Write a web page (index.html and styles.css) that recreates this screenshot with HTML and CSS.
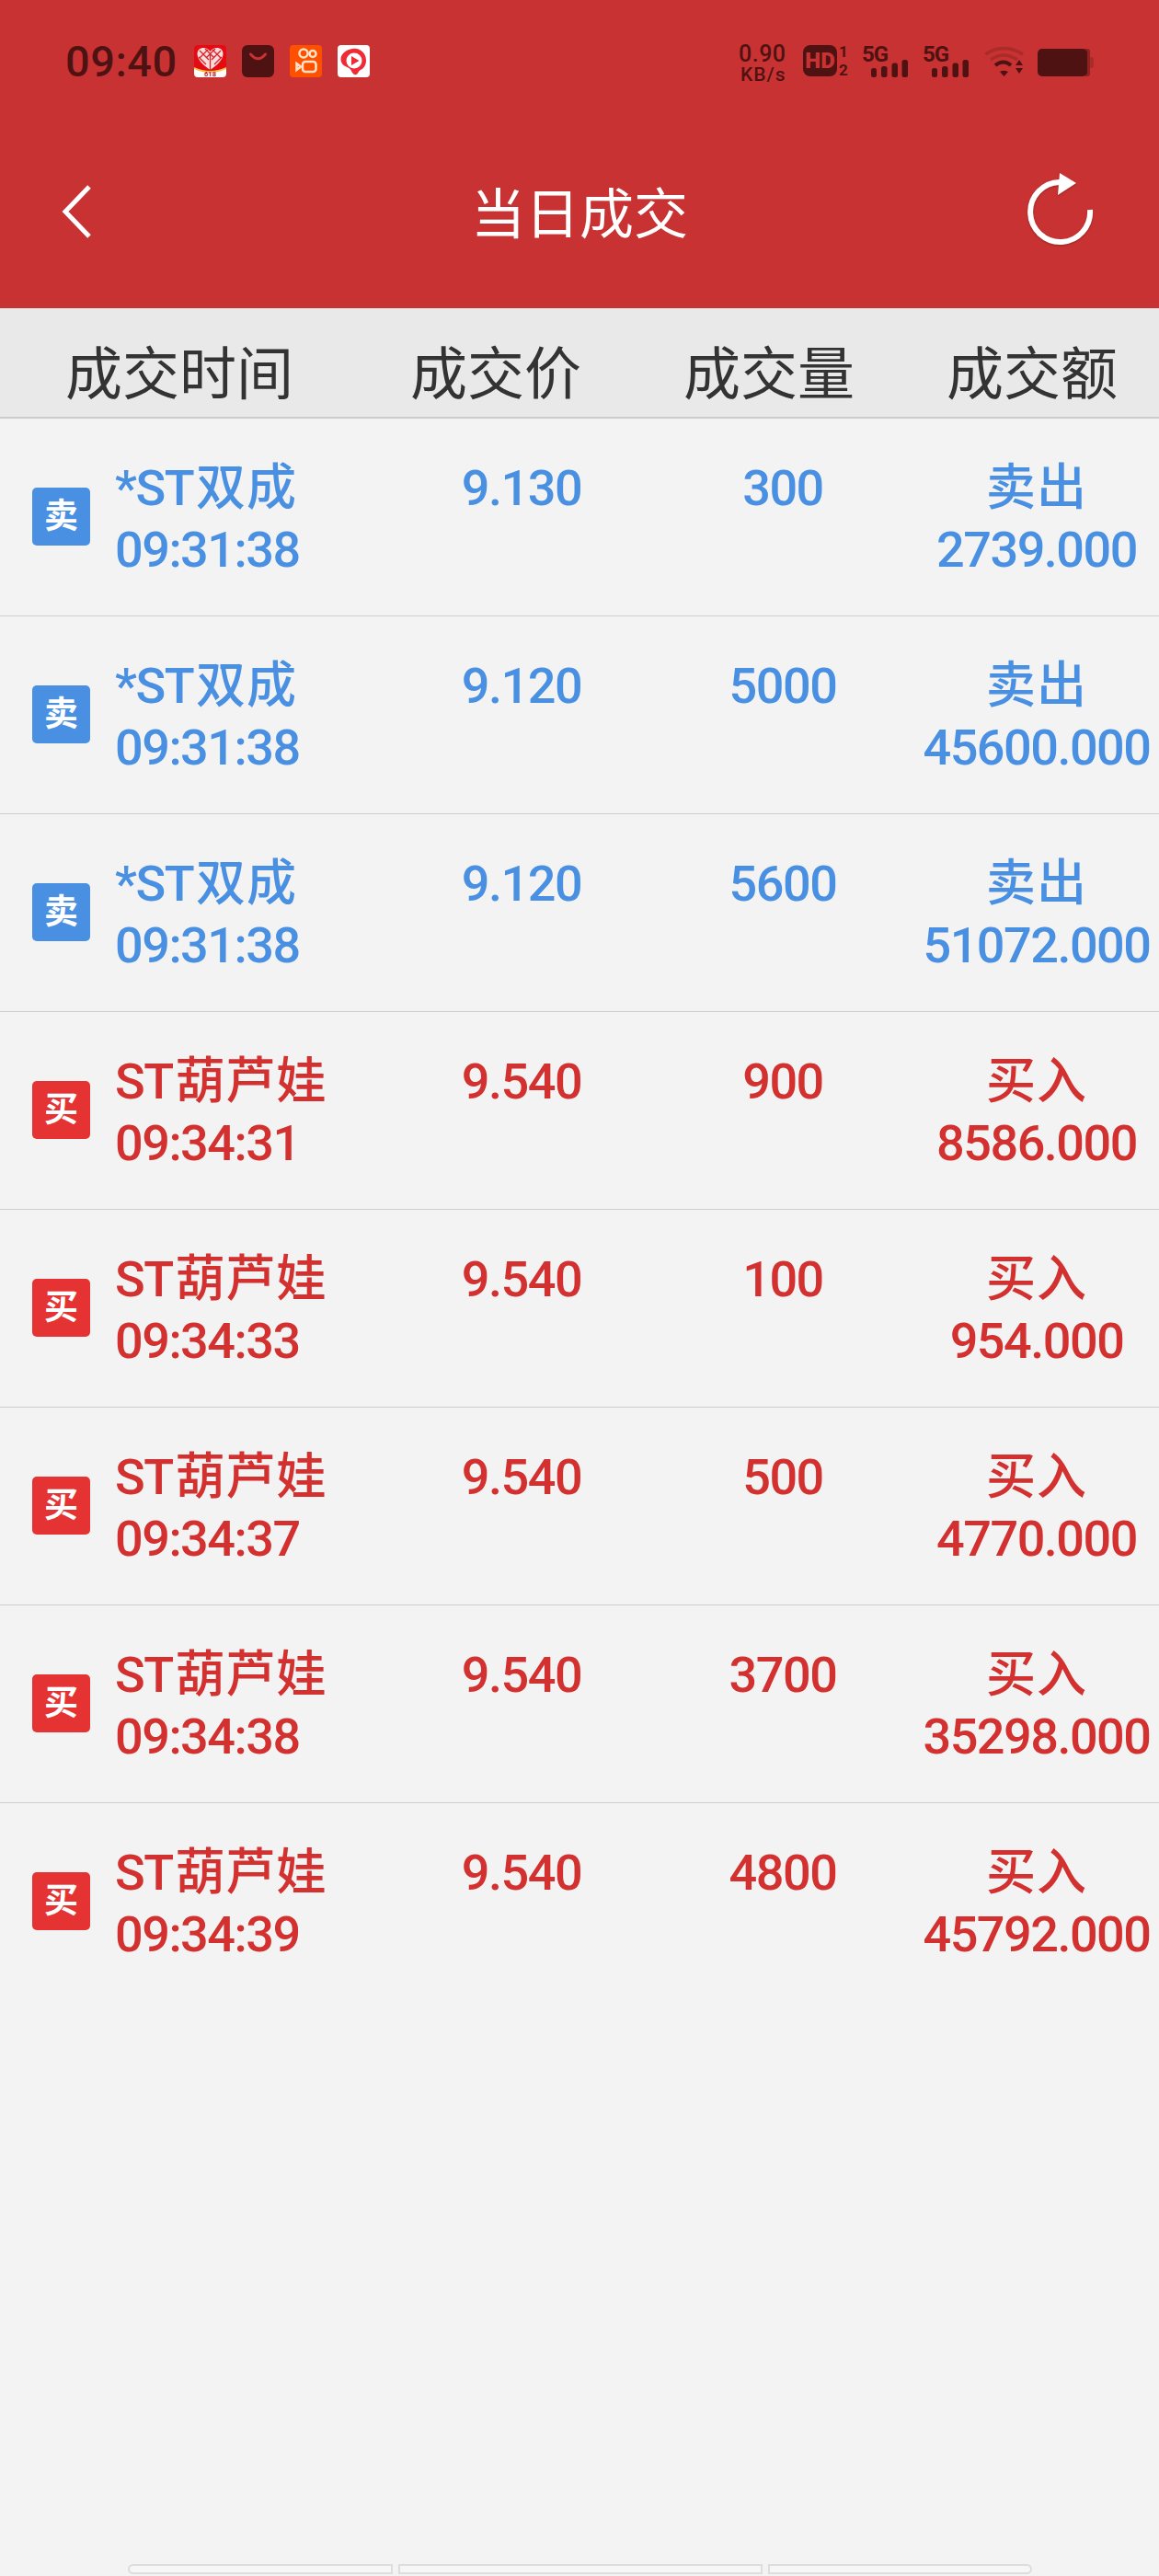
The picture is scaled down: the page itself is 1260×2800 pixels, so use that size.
FILE: index.html
```html
<!DOCTYPE html>
<html lang="zh-CN">
<head>
  <meta charset="UTF-8">
  <title>当日成交</title>
  <meta name="viewport" content="width=device-width, initial-scale=1.0">
  <link rel="stylesheet" href="styles.css">
</head>
<body>

  <div class="top">
    <!-- Status bar -->
    <div class="status">
      <div class="status-left">
        <span class="clock">09:40</span>
        <svg class="app" viewBox="0 0 35 35">
          <rect width="35" height="35" rx="4" fill="#e60b12"/>
          <path d="M0 25 Q17.500 33 35 25 V31 a4 4 0 0 1 -4 4 H4 a4 4 0 0 1 -4 -4 Z" fill="#fff"/>
          <path d="M0 24 Q17.500 32 35 24 V26 Q17.500 34 0 26 Z" fill="#f6c445"/>
          <path d="M17.500 27 C10 22 3.500 16 3.500 9.500 C3.500 5 7 3 10 3 C13 3 16 4.500 17.500 7 C19 4.500 22 3 25 3 C28 3 31.500 5 31.500 9.500 C31.500 16 25 22 17.500 27 Z" fill="#f7dcdc"/>
          <path d="M6 6 L16 16 M12 4 L22 14 M20 5 L29 14 M5 13 L13 21 M29 6 L19 16 M23 4 L13 14 M15 5 L6 14 M30 13 L22 21 M17.500 10 V28" stroke="#d8222a" stroke-width="1.300" fill="none"/>
          <text class="app-618" x="17.500" y="34">618</text>
        </svg>
        <svg class="app" viewBox="0 0 35 35">
          <rect width="35" height="35" rx="6" fill="#4f1212"/>
          <path d="M9.500 10 Q17.500 19.500 25.500 10" stroke="#c93232" stroke-width="3" fill="none" stroke-linecap="round"/>
        </svg>
        <svg class="app" viewBox="0 0 35 35">
          <rect width="35" height="35" rx="4" fill="#ff5000"/>
          <g fill="none" stroke="#ffe2c8" stroke-width="2.500">
            <circle cx="15" cy="9" r="4.500"/>
            <circle cx="25" cy="9.500" r="3.500"/>
            <rect x="14" y="18" width="14.500" height="11" rx="3"/>
            <path d="M7.500 20 L12 23.500 L7.500 27 Z"/>
          </g>
        </svg>
        <svg class="app" viewBox="0 0 35 35">
          <rect width="35" height="35" rx="4" fill="#fff"/>
          <path d="M16 4 C24 2.500 31 8.500 31 16.500 C31 21 29 25 25 27 C22 28.500 22.500 33 18.500 32 C15 31 15.500 26 11.500 24.500 C7 23 3.500 20 3.500 15.500 C3.500 9 10 5 16 4 Z" fill="#ee2b36"/>
          <circle cx="18" cy="17" r="8.500" fill="#fff"/>
          <path d="M15 12 L23.500 17 L15 22 Z" fill="#ee2b36"/>
        </svg>
      </div>
      <div class="status-right">
        <div class="speed"><span class="speed-num">0.90</span><span class="speed-unit">KB/s</span></div>
        <div class="hd">
          <span class="hd-box">HD</span>
          <span class="hd-nums"><span>1</span><span>2</span></span>
        </div>
        <div class="signal">
          <span class="signal-name">5G</span>
          <svg class="bars" viewBox="0 0 40 19">
            <rect x="0" y="9" width="6" height="10" rx="2.500"/>
            <rect x="11" y="7" width="6.500" height="12" rx="2.500"/>
            <rect x="22.500" y="3.500" width="6.500" height="15.500" rx="2.500"/>
            <rect x="33.500" y="0" width="6.500" height="19" rx="2.500"/>
          </svg>
        </div>
        <div class="signal">
          <span class="signal-name">5G</span>
          <svg class="bars" viewBox="0 0 40 19">
            <rect x="0" y="9" width="6" height="10" rx="2.500"/>
            <rect x="11" y="7" width="6.500" height="12" rx="2.500"/>
            <rect x="22.500" y="3.500" width="6.500" height="15.500" rx="2.500"/>
            <rect x="33.500" y="0" width="6.500" height="19" rx="2.500"/>
          </svg>
        </div>
        <svg class="wifi" viewBox="0 0 43 32">
          <g fill="none" stroke-width="3.500">
            <path d="M1.500 8 Q21 -5 42 8" stroke="#ab2b2b"/>
            <path d="M7 14 Q21 4 36 14" stroke="#ab2b2b"/>
            <path d="M12 20 Q21 13 29 20" stroke="#4f1212" stroke-width="4"/>
          </g>
          <path d="M17 27 Q21 24.500 26 27 L21.500 32 Z" fill="#4f1212"/>
          <path d="M38 14 L42 20 H34 Z M34 23 H42 L38 29 Z" fill="#4f1212"/>
        </svg>
        <svg class="battery" viewBox="0 0 62 30">
          <path d="M55 9 h3 a3 3 0 0 1 3 3 v6 a3 3 0 0 1 -3 3 h-3 Z" fill="#ab2b2b"/>
          <rect x="50" y="0" width="7" height="30" rx="3" fill="#8c2222"/>
          <rect x="0" y="0" width="54" height="30" rx="5" fill="#4f1212"/>
        </svg>
      </div>
    </div>

    <!-- Title bar -->
    <div class="nav">
      <svg class="nav-back" viewBox="0 0 34 60">
        <path d="M30 3 L4 30 L30 57" fill="none" stroke="#fff" stroke-width="5"/>
      </svg>
      <h1 class="nav-title">当日成交</h1>
      <svg class="nav-refresh" viewBox="0 0 76 84">
        <path d="M71 40 A32.500 32.500 0 1 1 38 10" fill="none" stroke="#fff" stroke-width="6"/>
        <path d="M38 0 L56 11 L36 24 Z" fill="#fff"/>
      </svg>
    </div>
  </div>

  <div class="head">
    <span>成交时间</span>
    <span>成交价</span>
    <span>成交量</span>
    <span>成交额</span>
  </div>

  <ul class="list">
    <li class="row sell">
      <div class="name"><span class="tag">卖</span><div class="name-text">*ST<span class="han">双成</span><br>09:31:38</div></div>
      <div class="cell">9.130</div>
      <div class="cell">300</div>
      <div class="cell"><span class="han">卖出</span><br>2739.000</div>
    </li>
    <li class="row sell">
      <div class="name"><span class="tag">卖</span><div class="name-text">*ST<span class="han">双成</span><br>09:31:38</div></div>
      <div class="cell">9.120</div>
      <div class="cell">5000</div>
      <div class="cell"><span class="han">卖出</span><br>45600.000</div>
    </li>
    <li class="row sell">
      <div class="name"><span class="tag">卖</span><div class="name-text">*ST<span class="han">双成</span><br>09:31:38</div></div>
      <div class="cell">9.120</div>
      <div class="cell">5600</div>
      <div class="cell"><span class="han">卖出</span><br>51072.000</div>
    </li>
    <li class="row buy">
      <div class="name"><span class="tag">买</span><div class="name-text">ST<span class="han">葫芦娃</span><br>09:34:31</div></div>
      <div class="cell">9.540</div>
      <div class="cell">900</div>
      <div class="cell"><span class="han">买入</span><br>8586.000</div>
    </li>
    <li class="row buy">
      <div class="name"><span class="tag">买</span><div class="name-text">ST<span class="han">葫芦娃</span><br>09:34:33</div></div>
      <div class="cell">9.540</div>
      <div class="cell">100</div>
      <div class="cell"><span class="han">买入</span><br>954.000</div>
    </li>
    <li class="row buy">
      <div class="name"><span class="tag">买</span><div class="name-text">ST<span class="han">葫芦娃</span><br>09:34:37</div></div>
      <div class="cell">9.540</div>
      <div class="cell">500</div>
      <div class="cell"><span class="han">买入</span><br>4770.000</div>
    </li>
    <li class="row buy">
      <div class="name"><span class="tag">买</span><div class="name-text">ST<span class="han">葫芦娃</span><br>09:34:38</div></div>
      <div class="cell">9.540</div>
      <div class="cell">3700</div>
      <div class="cell"><span class="han">买入</span><br>35298.000</div>
    </li>
    <li class="row buy">
      <div class="name"><span class="tag">买</span><div class="name-text">ST<span class="han">葫芦娃</span><br>09:34:39</div></div>
      <div class="cell">9.540</div>
      <div class="cell">4800</div>
      <div class="cell"><span class="han">买入</span><br>45792.000</div>
    </li>
  </ul>

  <!-- Bottom tabs -->
  <div class="tabs">
    <span class="tab tab-first"></span>
    <span class="tab tab-mid"></span>
    <span class="tab tab-last"></span>
  </div>

</body>
</html>
```

FILE: styles.css
```css
/* Base styles */
body {
  margin: 0;
  height: 2800px;
  display: flex;
  flex-direction: column;
  overflow: hidden;
  background-color: #f3f3f3;
  font-family: Roboto, "Noto Sans CJK SC", sans-serif;
  color: #333;
}

/* Red top area */
.top {
  height: 335px;
  background-color: #c93232;
  display: flex;
  flex-direction: column;
}

.status {
  height: 100px;
  padding: 49px 70px 0 71px;
  box-sizing: border-box;
  display: flex;
  justify-content: space-between;
  color: #4f1212;
}

.status-left {
  display: flex;
  align-items: flex-start;
}

.clock {
  width: 140px;
  font-size: 47px;
  line-height: 35px;
  font-weight: 500;
  letter-spacing: 0.5px;
}

.app {
  width: 35px;
  height: 35px;
  margin-right: 17px;
}

.app-618 {
  font-size: 7.500px;
  font-weight: 700;
  fill: #c2182a;
  text-anchor: middle;
}

.status-right {
  display: flex;
  align-items: flex-start;
}

.speed {
  width: 70px;
  display: flex;
  flex-direction: column;
  align-items: flex-start;
  font-weight: 500;
}

.speed-num {
  font-size: 25px;
  line-height: 20px;
  letter-spacing: 0.5px;
}

.speed-unit {
  margin: 2px 0 0 2px;
  font-size: 21px;
  line-height: 20px;
  letter-spacing: 1px;
}

.hd {
  width: 64px;
  display: flex;
  gap: 2px;
}

.hd-box {
  width: 37px;
  height: 34px;
  border-radius: 8px;
  background-color: #4f1212;
  color: #c93232;
  font-size: 24px;
  font-weight: 900;
  line-height: 34px;
  text-align: center;
}

.hd-nums {
  display: flex;
  flex-direction: column;
  justify-content: space-between;
  height: 34px;
  font-size: 17px;
  font-weight: 700;
  line-height: 14px;
}

.signal {
  width: 66px;
  height: 35px;
  display: flex;
  flex-direction: column;
}

.signal-name {
  height: 16px;
  font-size: 24px;
  font-weight: 700;
  line-height: 20px;
  letter-spacing: -1px;
}

.bars {
  width: 40px;
  height: 19px;
  margin-left: 10px;
  fill: #4f1212;
}

.wifi {
  width: 43px;
  height: 32px;
  margin: 2px 15px 0 1px;
}

.battery {
  width: 62px;
  height: 30px;
  margin-top: 4px;
}

/* Title bar */
.nav {
  flex: 1;
  position: relative;
  display: flex;
  justify-content: center;
  align-items: flex-start;
}

.nav-title {
  margin: 94px 0 0;
  font-size: 59px;
  font-weight: 400;
  line-height: 80px;
  color: #fff;
}

.nav-back {
  position: absolute;
  left: 67px;
  top: 100px;
  width: 34px;
  height: 60px;
}

.nav-refresh {
  position: absolute;
  left: 1114px;
  top: 88px;
  width: 76px;
  height: 84px;
  filter: drop-shadow(0 1px 1px rgba(0, 0, 0, 0.25));
}

/* Column headings */
.head {
  height: 90px;
  padding-top: 28px;
  display: grid;
  grid-template-columns: 390px 298px 296px 276px;
  text-align: center;
  background-color: #e9e9e9;
  border-bottom: 2px solid #cccccc;
  font-size: 62px;
  line-height: 90px;
  color: #333;
}

/* Trade list */
.list {
  list-style: none;
  margin: 0;
  padding: 0;
}

.row {
  height: 215px;
  box-sizing: border-box;
  display: grid;
  grid-template-columns: 426px 282px 286px 266px;
  padding-top: 39px;
  border-bottom: 1px solid #cdcdcd;
  font-size: 54px;
  font-weight: 500;
  line-height: 67px;
  letter-spacing: -1.500px;
}

.row:last-child {
  border-bottom: none;
}

.han {
  letter-spacing: 1px;
}

.name-text .han {
  margin-left: 3px;
}

.sell {
  color: #4a90e2;
}

.buy {
  color: #d33030;
}

.name {
  display: flex;
  align-items: center;
  gap: 27px;
  padding-left: 35px;
  height: 134px;
  white-space: nowrap;
}

.name-text {
  align-self: flex-start;
  padding-top: 3px;
}

.tag {
  flex: none;
  width: 63px;
  height: 63px;
  border-radius: 5px;
  color: #fff;
  font-size: 37px;
  font-weight: 700;
  line-height: 63px;
  letter-spacing: 0;
  text-align: center;
}

.sell .tag {
  background-color: #4a90e2;
}

.buy .tag {
  background-color: #e53232;
}

.cell {
  padding-top: 3px;
  text-align: center;
  white-space: nowrap;
}

/* Bottom tabs */
.tabs {
  margin-top: auto;
  padding-bottom: 2px;
  display: flex;
  justify-content: center;
  gap: 6px;
}

.tab {
  height: 11px;
  background-color: #f6f6f6;
  border: 2px solid #dddddd;
  box-sizing: border-box;
}

.tab-first {
  width: 288px;
  border-radius: 6px 0 0 6px;
}

.tab-mid {
  width: 396px;
}

.tab-last {
  width: 287px;
  border-radius: 0 6px 6px 0;
}
```
